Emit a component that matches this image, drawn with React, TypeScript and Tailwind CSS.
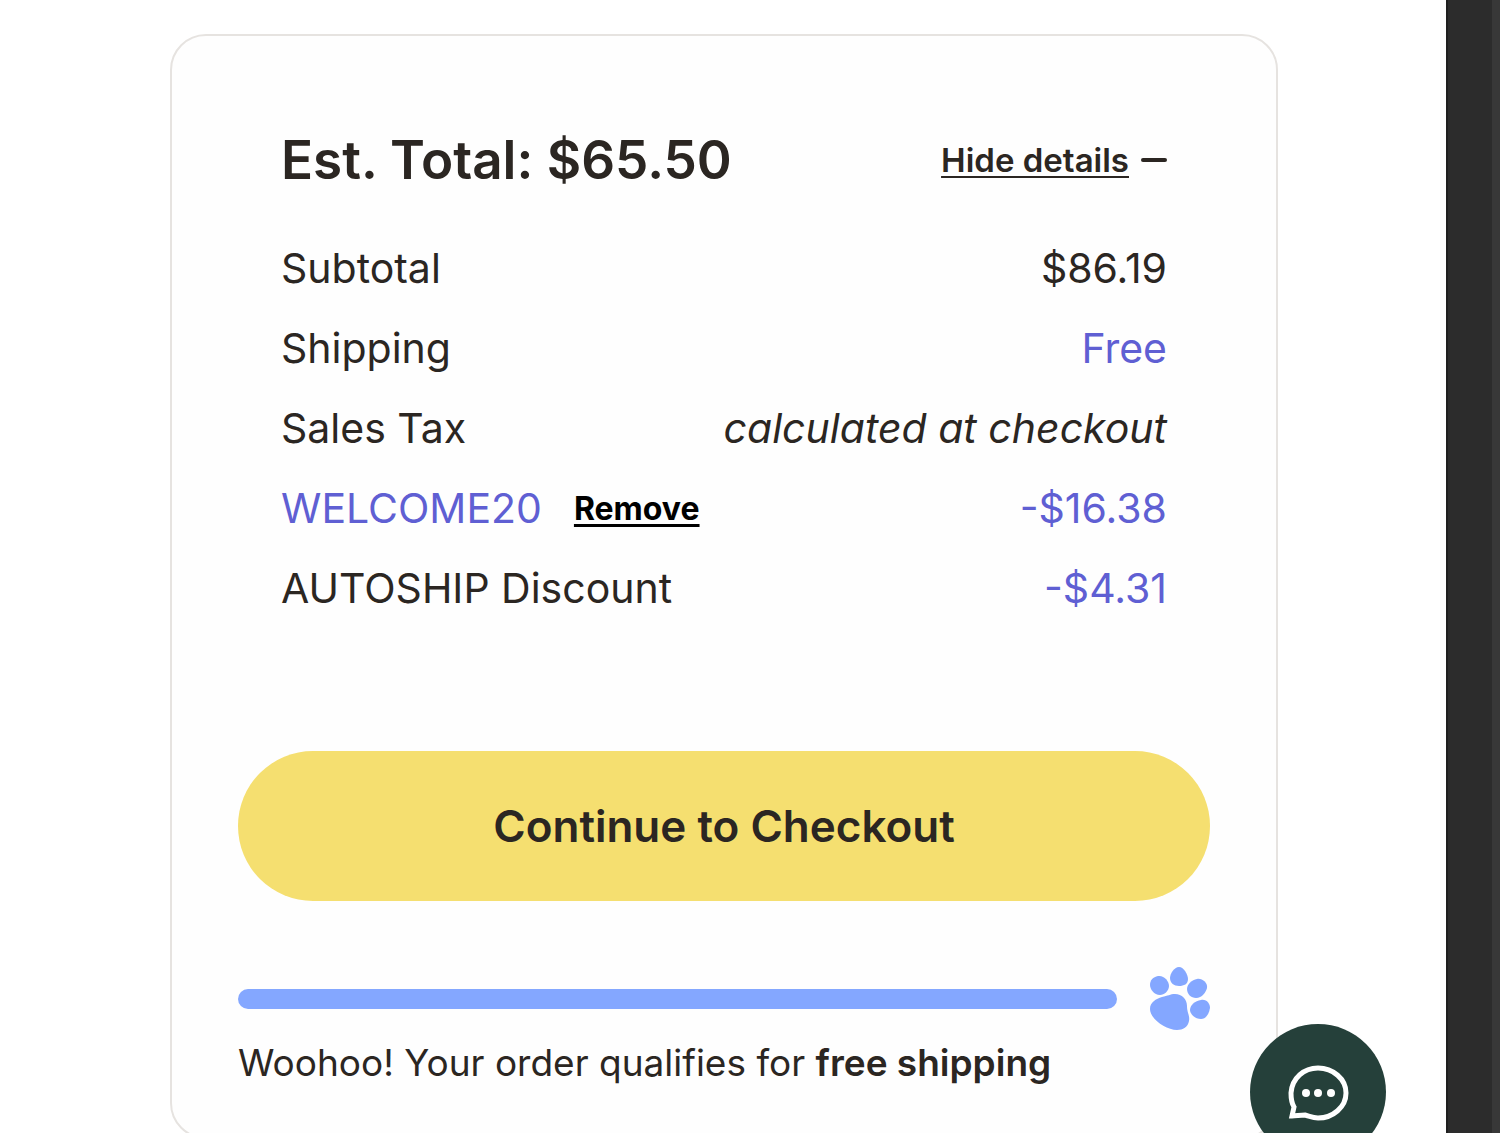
import { useState } from 'react'
import { clsx } from 'clsx'

interface SummaryLine {
  label: string
  value: string
  discount?: boolean
  italic?: boolean
  code?: boolean
}

const lines: SummaryLine[] = [
  { label: 'Subtotal', value: '$86.19' },
  { label: 'Shipping', value: 'Free', discount: true },
  { label: 'Sales Tax', value: 'calculated at checkout', italic: true },
  { label: 'WELCOME20', value: '-$16.38', discount: true, code: true },
  { label: 'AUTOSHIP Discount', value: '-$4.31', discount: true },
]

function PawIcon() {
  return (
    <svg viewBox="0 0 60 64" className="h-16 w-[60px] shrink-0 fill-[#84a7ff]" aria-hidden="true">
      <path d="M8 9C14 8 19 14 19 19C19 24 14 28 10 28C4 28 0 22 0 18C0 13 3 10 8 9Z" />
      <path d="M29 0C34 0 38 8 38 12C38 17 34 19 29 19C24 19 20 16 20 11C20 7 24 0 29 0Z" />
      <path d="M47 12C52 11 58 16 57 21C56 25 52 31 46 31C41 31 37 27 37 22C37 17 42 13 47 12Z" />
      <path d="M51 33C57 32 60 37 60 41C59 47 56 52 51 52C45 52 40 47 40 43C40 38 45 34 51 33Z" />
      <path d="M25 27C32 27 37 32 37 39C37 46 40 48 39 54C38 60 33 63 27 63C16 63 0 52 0 42C0 35 6 32 12 30C18 29 20 27 25 27Z" />
    </svg>
  )
}

function ChatIcon() {
  return (
    <svg viewBox="0 0 60 56" className="h-14 w-[60px]" fill="none" overflow="visible" aria-hidden="true">
      <path
        d="M4 52L6 43C3 38 3 33 3 29C4 14 16 4 30 4C45 4 58 15 58 29C58 43 45 54 30 54C25 54 21 52 17 51C12 51 8 52 4 52Z"
        className="stroke-white"
        strokeWidth="5"
      />
      <g className="fill-white">
        <circle cx="18" cy="29" r="4" />
        <circle cx="30" cy="29" r="4" />
        <circle cx="43" cy="29" r="4" />
      </g>
    </svg>
  )
}

export default function App() {
  const [open, setOpen] = useState(true)
  const [hasCode, setHasCode] = useState(true)

  const visible = lines.filter((line) => hasCode || !line.code)

  return (
    <div className="flex h-screen overflow-hidden bg-white font-['Inter','Liberation_Sans',sans-serif] text-[#2b2622]">
      <main className="flex-1 pt-[34px] pr-4 pl-[18px]">
        <section className="mx-auto max-w-[1108px] rounded-[36px] border-2 border-[#e6e3e0] bg-[#fefefe] px-[66px] pt-[92px] pb-[50px]">
          <div className="px-[43px]">
            <div className="flex items-center justify-between">
              <h1 className="text-[53px] leading-[64px] font-semibold">Est. Total: $65.50</h1>
              <button
                type="button"
                aria-expanded={open}
                onClick={() => setOpen(!open)}
                className="flex items-center gap-3 text-[33px] leading-[40px] font-semibold"
              >
                <span className="underline decoration-2 underline-offset-4">
                  {open ? 'Hide details' : 'Show details'}
                </span>
                <span className="h-1 w-[26px] rounded-full bg-[#2b2622]" />
              </button>
            </div>

            {open && (
              <dl className="mt-[37px] text-[41px] font-normal">
                {visible.map((line) => (
                  <div key={line.label} className="flex h-20 items-center justify-between">
                    <dt className="flex items-center gap-8">
                      <span className={clsx(line.code && 'text-[#5f5fd3]')}>{line.label}</span>
                      {line.code && (
                        <button
                          type="button"
                          onClick={() => setHasCode(false)}
                          className="text-[32px] font-bold text-black underline decoration-3 underline-offset-4"
                        >
                          Remove
                        </button>
                      )}
                    </dt>
                    <dd className={clsx(line.discount && 'text-[#5f5fd3]', line.italic && 'italic')}>
                      {line.value}
                    </dd>
                  </div>
                ))}
              </dl>
            )}
          </div>

          <button
            type="button"
            className="mt-[122px] h-[150px] w-full rounded-full bg-[#f5df70] text-[44px] font-semibold"
          >
            Continue to Checkout
          </button>

          <div className="mt-[66px] flex items-center gap-[33px]">
            <div
              role="progressbar"
              aria-label="Free shipping progress"
              aria-valuenow={100}
              className="h-5 flex-1 rounded-full bg-[#84a7ff]"
            />
            <PawIcon />
          </div>
          <p className="mt-2 text-[37px] leading-[48px] font-normal">
            Woohoo! Your order qualifies for <strong className="font-semibold">free shipping</strong>
          </p>
        </section>
      </main>

      <aside className="w-[54px] border-r-8 border-l-2 border-r-[#383838] border-l-[#1f1f1f] bg-[#2c2c2c]" />

      <button
        type="button"
        aria-label="Open chat"
        className="fixed right-[114px] -bottom-[27px] flex size-[136px] items-center justify-center rounded-full bg-[#25403a]"
      >
        <ChatIcon />
      </button>
    </div>
  )
}
